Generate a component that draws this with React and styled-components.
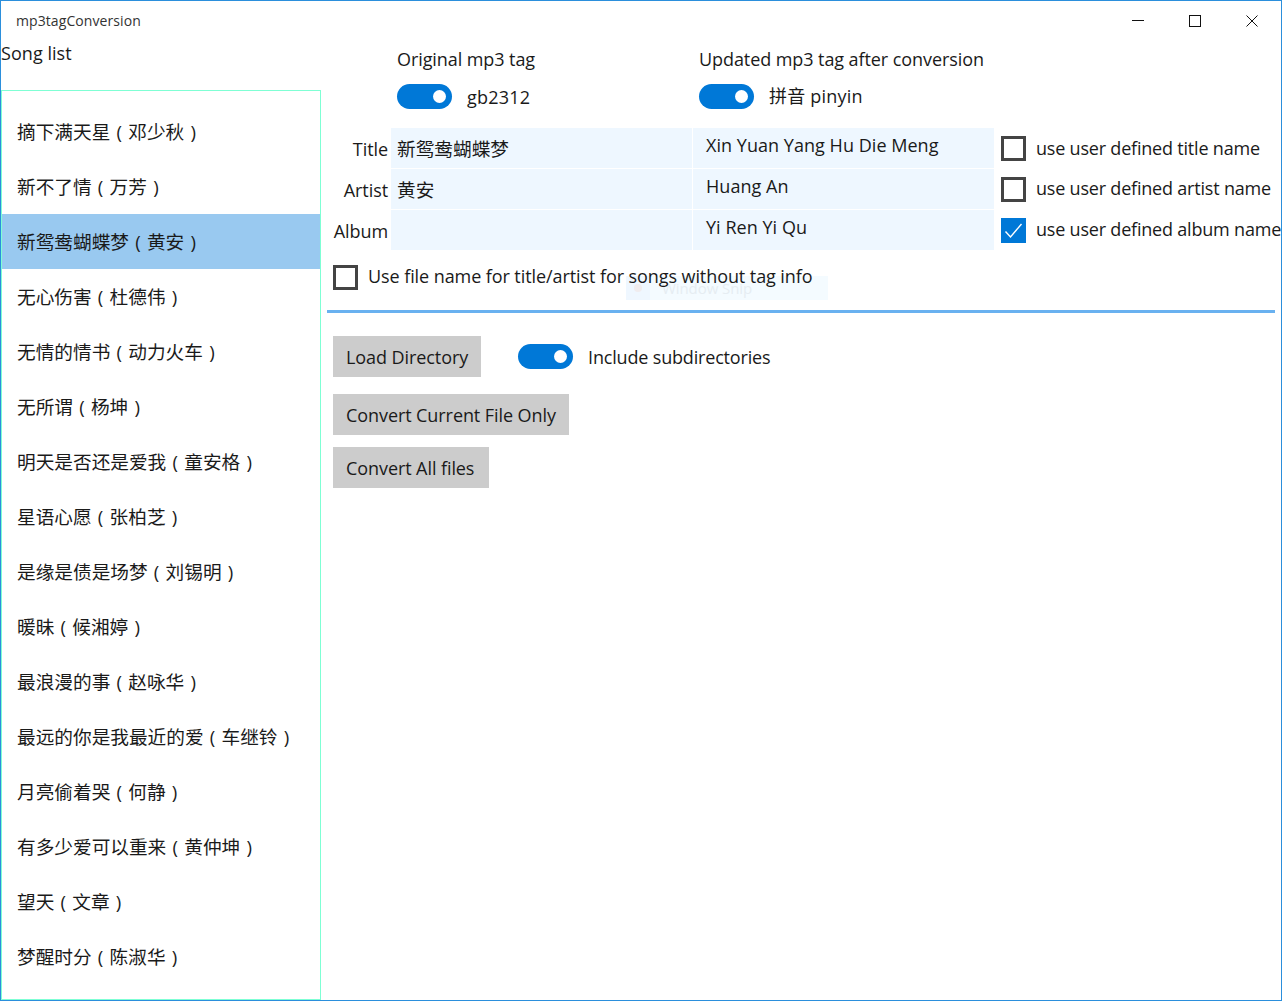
import React from 'react'
import styled, { createGlobalStyle } from 'styled-components'

const Global = createGlobalStyle`
    html, body { margin: 0; padding: 0; background: #fff; overflow: hidden; }
    * { box-sizing: border-box; }
`

const FONT = `"Open Sans", "Noto Sans CJK SC", sans-serif`

const Window = styled.div`
    width: 1282px;
    height: 1001px;
    border: 1px solid #2b8fdc;
    display: flex;
    flex-direction: column;
    font-family: ${FONT};
    font-size: 18px;
    letter-spacing: -0.08px;
    color: #1a1a1a;
    overflow: hidden;
    position: relative;
`

const TitleBar = styled.div`
    height: 39px;
    flex: none;
    display: flex;
    align-items: center;
    justify-content: space-between;
    padding-left: 15px;
`

const AppName = styled.div`
    font-size: 14px;
    letter-spacing: 0.08px;
    color: #333;
`

const WinButtons = styled.div`
    display: flex;
    padding-right: 1px;
`

const WinButton = styled.div`
    width: 57px;
    height: 38px;
    display: flex;
    align-items: center;
    justify-content: center;
`

const Body = styled.div`
    flex: 1;
    display: flex;
    min-height: 0;
`

const Sidebar = styled.div`
    width: 320px;
    flex: none;
    display: flex;
    flex-direction: column;
`

const SideTitle = styled.div`
    height: 50px;
    line-height: 26px;
    letter-spacing: 0.05px;
`

const SongList = styled.div`
    flex: 1;
    border: 1px solid #7fffd4;
    padding-top: 13px;
    overflow: hidden;
`

const Song = styled.div`
    height: 55px;
    line-height: 55px;
    padding-left: 15px;
    font-size: 18.67px;
    letter-spacing: 0;
    word-spacing: 1.4px;
    background: ${({ selected }) => (selected ? '#99c9f0' : 'transparent')};
`

const Main = styled.div`
    flex: 1;
    min-width: 0;
    padding-left: 6px;
    position: relative;
`

const TagHeads = styled.div`
    display: grid;
    grid-template-columns: 302px 1fr;
    padding: 4px 0 0 70px;
    height: 88px;
`

const TagHead = styled.div`
    display: flex;
    flex-direction: column;
    gap: 10px;
`

const HeadLabel = styled.div`
    line-height: 30px;
`

const ToggleRow = styled.div`
    display: flex;
    align-items: center;
    gap: 15px;
    height: 25px;
`

const ToggleText = styled.span`
    line-height: 20px;
    letter-spacing: 0.2px;
    margin-top: ${({ lift }) => -(lift || 0)}px;
`

const Toggle = styled.div`
    width: 55px;
    height: 25px;
    border-radius: 13px;
    background: #0078d7;
    flex: none;
    position: relative;

    &::after {
        content: '';
        position: absolute;
        right: 6px;
        top: 6px;
        width: 13px;
        height: 13px;
        border-radius: 50%;
        background: #fff;
    }
`

const FieldGrid = styled.div`
    display: grid;
    grid-template-columns: 63px 301px 301px 1fr;
    grid-auto-rows: 40px;
    column-gap: 1px;
    row-gap: 1px;
`

const FieldLabel = styled.div`
    text-align: right;
    line-height: 42px;
    margin-right: 2px;
`

const OrigCell = styled.div`
    background: #eef7ff;
    padding-left: 6px;
    line-height: 42px;
    font-size: 18.67px;
    letter-spacing: 0;
`

const NewCell = styled.div`
    background: #eef7ff;
    padding-left: 13px;
    line-height: 34px;
    letter-spacing: 0.04px;
`

const CheckRow = styled.div`
    display: flex;
    align-items: center;
    gap: 10px;
    white-space: nowrap;
`

const CheckLabel = styled.span`
    line-height: 20px;
    margin-top: ${({ lift }) => -(lift || 0)}px;
`

const Check = styled.div`
    width: 25px;
    height: 25px;
    flex: none;
    border: 3px solid ${({ checked }) => (checked ? '#0078d7' : '#444')};
    background: ${({ checked }) => (checked ? '#0078d7' : '#fff')};
    display: flex;
    align-items: center;
    justify-content: center;
`

const TagOption = styled(CheckRow)`
    padding-left: 6px;
    letter-spacing: -0.2px;
`

const FileNameRow = styled(CheckRow)`
    margin-top: 15px;
    padding-left: 6px;
    height: 25px;
    position: relative;
    z-index: 1;
`

const Divider = styled.div`
    height: 3px;
    background: #69b1f0;
    margin: 20px 6px 0 0;
`

const Controls = styled.div`
    padding: 23px 0 0 6px;
    display: flex;
    flex-direction: column;
    align-items: flex-start;
`

const LoadRow = styled.div`
    display: flex;
    align-items: center;
    margin-bottom: 17px;
`

const GrayButton = styled.div`
    height: 41px;
    line-height: 42px;
    padding: 0 ${({ right }) => right || 13}px 0 13px;
    background: #ccc;
    white-space: nowrap;
    margin-bottom: ${({ gap }) => gap || 0}px;
`

const IncludeToggle = styled(ToggleRow)`
    margin-left: 37px;
    letter-spacing: -0.18px;
`

// ghost of the snipping tool caught behind the checkbox row
const SnipGhost = styled.div`
    position: absolute;
    left: 305px;
    top: 236px;
    width: 202px;
    height: 24px;
    background: linear-gradient(to right, #eff7ff 24px, #f4fbff 24px);
    display: flex;
    align-items: center;
    color: #e6edf2;
    font-size: 15px;
    padding-left: 36px;

    &::before {
        content: '';
        position: absolute;
        left: 8px;
        top: 8px;
        width: 8px;
        height: 8px;
        border-radius: 50%;
        background: #f0ecee;
    }
`

const songs = [
    '摘下满天星 ( 邓少秋 )',
    '新不了情 ( 万芳 )',
    '新鸳鸯蝴蝶梦 ( 黄安 )',
    '无心伤害 ( 杜德伟 )',
    '无情的情书 ( 动力火车 )',
    '无所谓 ( 杨坤 )',
    '明天是否还是爱我 ( 童安格 )',
    '星语心愿 ( 张柏芝 )',
    '是缘是债是场梦 ( 刘锡明 )',
    '暖昧 ( 候湘婷 )',
    '最浪漫的事 ( 赵咏华 )',
    '最远的你是我最近的爱 ( 车继铃 )',
    '月亮偷着哭 ( 何静 )',
    '有多少爱可以重来 ( 黄仲坤 )',
    '望天 ( 文章 )',
    '梦醒时分 ( 陈淑华 )',
]

const fields = [
    { label: 'Title', orig: '新鸳鸯蝴蝶梦', pinyin: 'Xin Yuan Yang Hu Die Meng', option: 'use user defined title name' },
    { label: 'Artist', orig: '黄安', pinyin: 'Huang An', option: 'use user defined artist name' },
    { label: 'Album', orig: '', pinyin: 'Yi Ren Yi Qu', option: 'use user defined album name', checked: true },
]

function CheckBox({ checked }) {
    return (
        <Check checked={checked}>
            {checked && (
                <svg width="19" height="19" viewBox="0 0 19 19" fill="none">
                    <path d="M1.5 10.5 L6.5 16 L17.5 3" stroke="#fff" strokeWidth="1.4" />
                </svg>
            )}
        </Check>
    )
}

export default function App() {
    return (
        <Window>
            <Global />
            <TitleBar>
                <AppName>mp3tagConversion</AppName>
                <WinButtons>
                    <WinButton>
                        <svg width="12" height="12" viewBox="0 0 12 12"><path d="M0 5.5H12" stroke="#111" /></svg>
                    </WinButton>
                    <WinButton>
                        <svg width="12" height="12" viewBox="0 0 12 12" fill="none"><rect x="0.5" y="0.5" width="11" height="11" stroke="#111" /></svg>
                    </WinButton>
                    <WinButton>
                        <svg width="12" height="12" viewBox="0 0 12 12" fill="none"><path d="M0.5 0.5L11.5 11.5M11.5 0.5L0.5 11.5" stroke="#111" /></svg>
                    </WinButton>
                </WinButtons>
            </TitleBar>
            <Body>
                <Sidebar>
                    <SideTitle>Song list</SideTitle>
                    <SongList>
                        {songs.map((s, i) => (
                            <Song key={s} selected={i === 2}>{s}</Song>
                        ))}
                    </SongList>
                </Sidebar>
                <Main>
                    <TagHeads>
                        <TagHead>
                            <HeadLabel>Original mp3 tag</HeadLabel>
                            <ToggleRow><Toggle /><ToggleText>gb2312</ToggleText></ToggleRow>
                        </TagHead>
                        <TagHead>
                            <HeadLabel>Updated mp3 tag after conversion</HeadLabel>
                            <ToggleRow><Toggle /><ToggleText lift={1}>拼音 pinyin</ToggleText></ToggleRow>
                        </TagHead>
                    </TagHeads>
                    <FieldGrid>
                        {fields.map((f) => (
                            <React.Fragment key={f.label}>
                                <FieldLabel>{f.label}</FieldLabel>
                                <OrigCell>{f.orig}</OrigCell>
                                <NewCell>{f.pinyin}</NewCell>
                                <TagOption>
                                    <CheckBox checked={f.checked} />
                                    <CheckLabel lift={f.label === 'Title' ? 0 : 2}>{f.option}</CheckLabel>
                                </TagOption>
                            </React.Fragment>
                        ))}
                    </FieldGrid>
                    <SnipGhost>Window Snip</SnipGhost>
                    <FileNameRow>
                        <CheckBox />
                        <CheckLabel lift={3}>Use file name for title/artist for songs without tag info</CheckLabel>
                    </FileNameRow>
                    <Divider />
                    <Controls>
                        <LoadRow>
                            <GrayButton>Load Directory</GrayButton>
                            <IncludeToggle><Toggle />Include subdirectories</IncludeToggle>
                        </LoadRow>
                        <GrayButton gap={12}>Convert Current File Only</GrayButton>
                        <GrayButton right={15}>Convert All files</GrayButton>
                    </Controls>
                </Main>
            </Body>
        </Window>
    )
}
